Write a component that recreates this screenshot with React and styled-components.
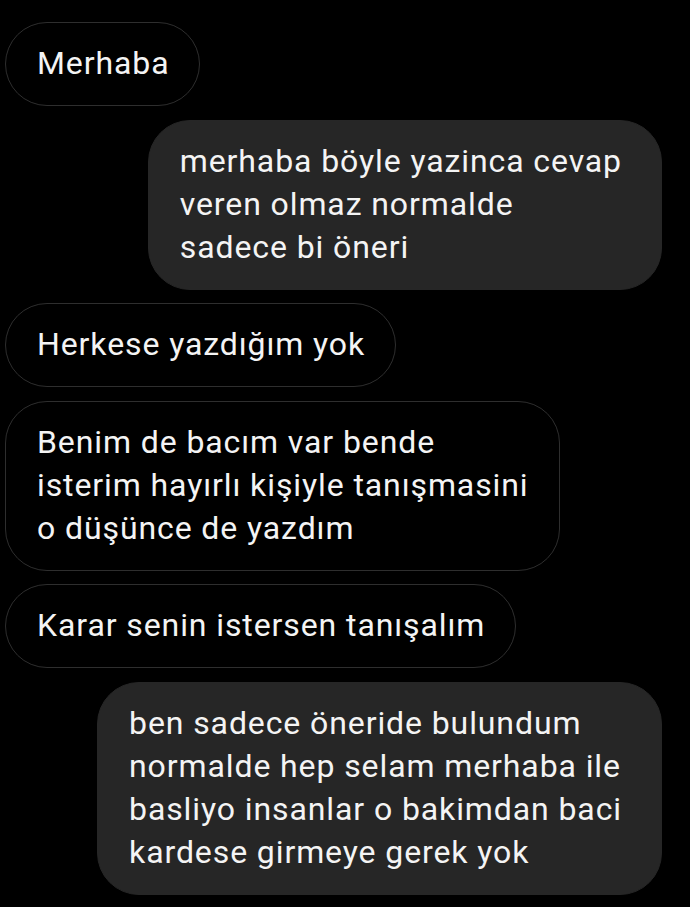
import React from 'react'
import styled, { createGlobalStyle } from 'styled-components'

const GlobalStyle = createGlobalStyle`
  html, body {
    margin: 0;
    padding: 0;
    background: #000;
  }
`

const messages = [
  { mine: false, lines: ['Merhaba'] },
  { mine: true, lines: ['merhaba böyle yazinca cevap', 'veren olmaz normalde', 'sadece bi öneri'] },
  { mine: false, lines: ['Herkese yazdığım yok'] },
  { mine: false, lines: ['Benim de bacım var bende', 'isterim hayırlı kişiyle tanışmasini', 'o düşünce de yazdım'] },
  { mine: false, lines: ['Karar senin istersen tanışalım'] },
  { mine: true, lines: ['ben sadece öneride bulundum', 'normalde hep selam merhaba ile', 'basliyo insanlar o bakimdan baci', 'kardese girmeye gerek yok'] },
]

function App() {
  return (
    <>
      <GlobalStyle />
      <Chat>
        {messages.map((m, i) => (
          <Row key={i} $mine={m.mine}>
            <Bubble $mine={m.mine}>
              {m.lines.map((l, j) => (
                <Line key={j}>{l}</Line>
              ))}
            </Bubble>
          </Row>
        ))}
      </Chat>
    </>
  )
}

export default App

const Chat = styled.div`
  width: 690px;
  height: 907px;
  box-sizing: border-box;
  background: #000;
  padding: 22px 28px 0 5px;
  display: flex;
  flex-direction: column;
  gap: 13.5px;
  overflow: hidden;
`

const Row = styled.div`
  display: flex;
  justify-content: ${p => (p.$mine ? 'flex-end' : 'flex-start')};
`

const Bubble = styled.div`
  box-sizing: border-box;
  padding: 19px ${p => (p.$mine ? '39px' : '30px')} 20px 31px;
  border-radius: 42px;
  background: ${p => (p.$mine ? '#262626' : '#000')};
  border: 1.5px solid ${p => (p.$mine ? '#262626' : '#2e2e2e')};
  color: #f4f4f4;
  font-family: Roboto, "Noto Sans", sans-serif;
  font-size: 32px;
  letter-spacing: 0.9px;
  line-height: 43px;
`

const Line = styled.div`
  white-space: nowrap;
`
